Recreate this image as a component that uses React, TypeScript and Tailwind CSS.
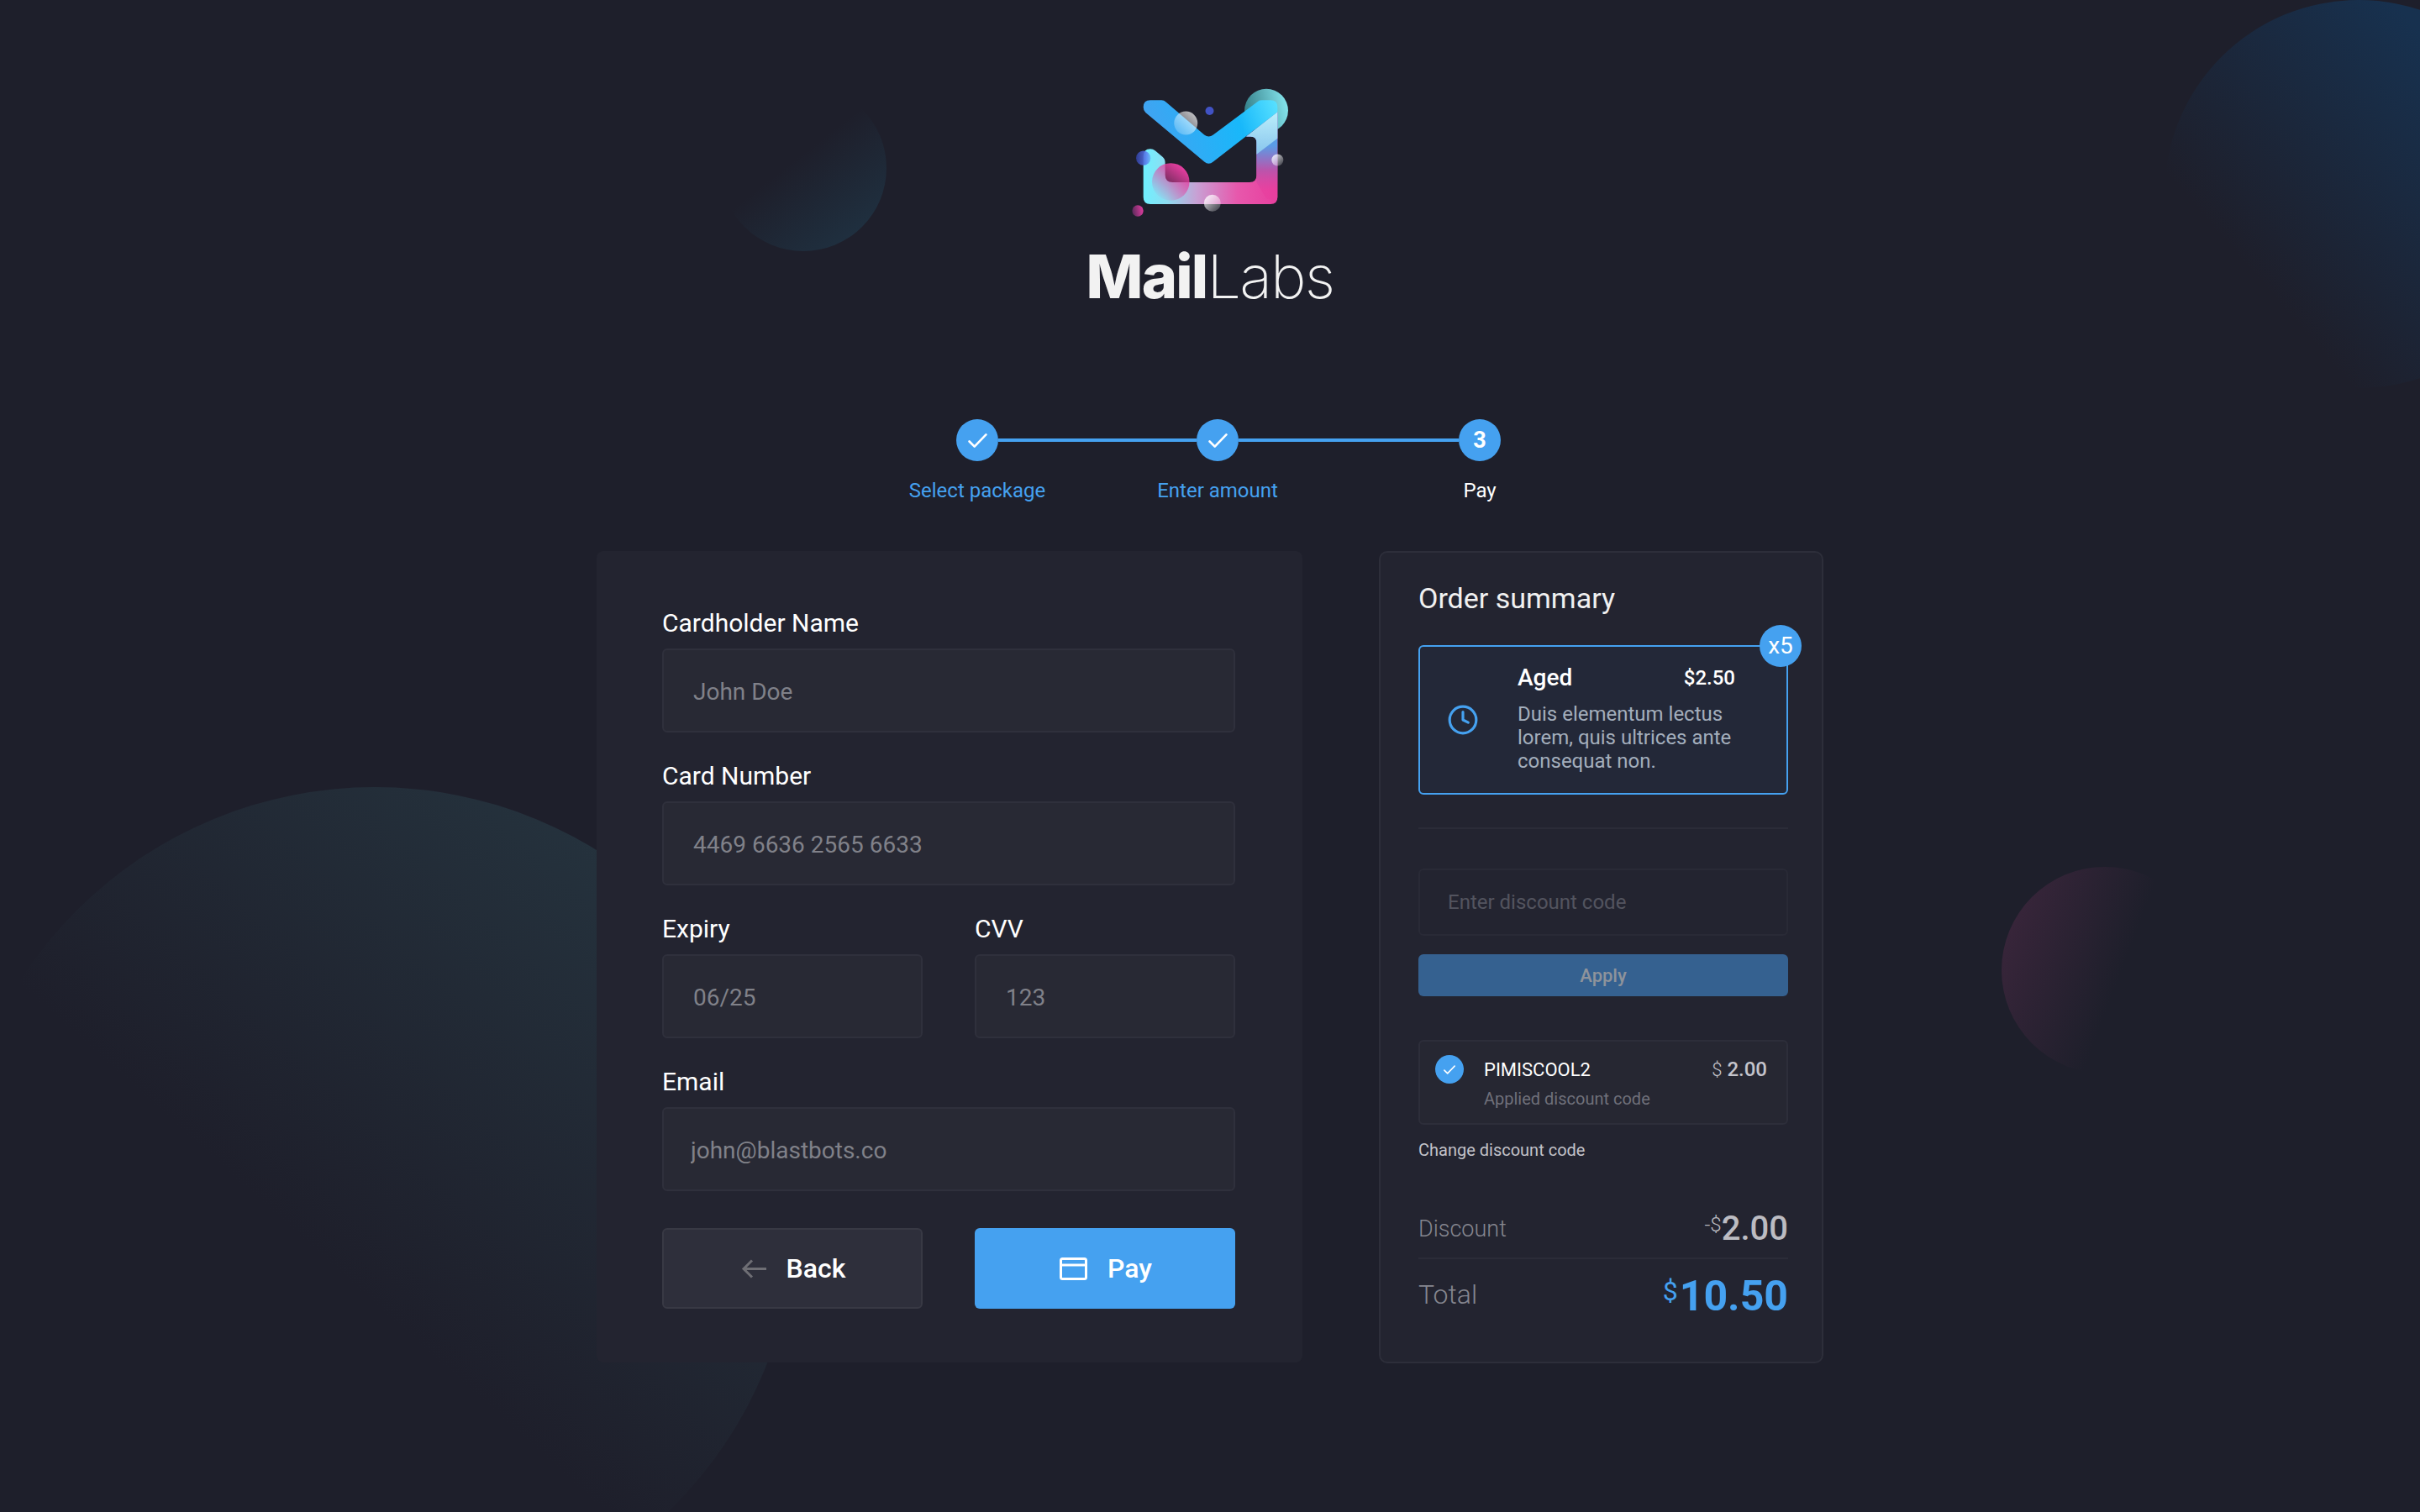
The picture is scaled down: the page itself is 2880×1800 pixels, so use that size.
import { Clock } from 'lucide-react';

function CheckMark({ className }: { className: string }) {
  return (
    <svg viewBox="0 0 24 18" fill="none" stroke="white" strokeWidth="2.8" strokeLinecap="round" strokeLinejoin="round" className={className}>
      <path d="M1.5 10 L8 16.5 L22.5 1.5" />
    </svg>
  );
}

function Logo() {
  return (
    <svg viewBox="320 75 560 460" className="w-[187px] h-[153px]">
      <defs>
        <linearGradient id="teal" x1="0" y1="0.5" x2="1" y2="0.3">
          <stop offset="0" stopColor="#35808a" />
          <stop offset="1" stopColor="#86e6ee" />
        </linearGradient>
        <linearGradient id="bottom" gradientUnits="userSpaceOnUse" x1="360" y1="0" x2="840" y2="0">
          <stop offset="0" stopColor="#6ff0ff" />
          <stop offset="0.18" stopColor="#8fdcf0" />
          <stop offset="0.4" stopColor="#c8a0d4" />
          <stop offset="0.7" stopColor="#e758ac" />
          <stop offset="1" stopColor="#e83e9e" />
        </linearGradient>
        <linearGradient id="side" gradientUnits="userSpaceOnUse" x1="0" y1="280" x2="0" y2="440">
          <stop offset="0" stopColor="#5a9ce6" />
          <stop offset="0.55" stopColor="#b955ac" />
          <stop offset="1" stopColor="#e83e9e" stopOpacity="0.6" />
        </linearGradient>
        <linearGradient id="vee" gradientUnits="userSpaceOnUse" x1="360" y1="300" x2="840" y2="120">
          <stop offset="0" stopColor="#47a0f0" />
          <stop offset="0.7" stopColor="#18b8fa" />
          <stop offset="1" stopColor="#5ae2ff" />
        </linearGradient>
        <linearGradient id="gloss" gradientUnits="userSpaceOnUse" x1="800" y1="170" x2="800" y2="300">
          <stop offset="0" stopColor="#b8ecfa" />
          <stop offset="1" stopColor="#8cc8ee" />
        </linearGradient>
        <linearGradient id="ballA" x1="1" y1="0" x2="0" y2="1">
          <stop offset="0" stopColor="#fff" stopOpacity="0.8" />
          <stop offset="1" stopColor="#fff" stopOpacity="0.12" />
        </linearGradient>
        <linearGradient id="ballB" x1="0" y1="0" x2="1" y2="1">
          <stop offset="0" stopColor="#fff" stopOpacity="0.9" />
          <stop offset="1" stopColor="#fff" stopOpacity="0.1" />
        </linearGradient>
        <linearGradient id="pinkBall" x1="0.8" y1="0.1" x2="0.2" y2="0.9">
          <stop offset="0" stopColor="#e63ea0" />
          <stop offset="1" stopColor="#e63ea0" stopOpacity="0.05" />
        </linearGradient>
        <linearGradient id="pinkDot" x1="1" y1="0.4" x2="0" y2="0.6">
          <stop offset="0" stopColor="#e03ca0" />
          <stop offset="1" stopColor="#5a2a5a" />
        </linearGradient>
        <linearGradient id="blueDot" x1="0" y1="0.5" x2="1" y2="0.5">
          <stop offset="0" stopColor="#2d3a90" />
          <stop offset="0.7" stopColor="#5a78f0" stopOpacity="0.85" />
          <stop offset="1" stopColor="#5a78f0" stopOpacity="0.4" />
        </linearGradient>
      </defs>
      <circle cx="800" cy="155" r="78" fill="url(#teal)" />
      <path
        d="M360 318 Q360 292 385 292 Q395 292 402 298 L428 320 Q438 328 438 340 V385 Q438 412 465 412 H740 Q765 412 765 387 V270 Q765 248 743 248 H728 L840 160 V465 Q840 490 815 490 H385 Q360 490 360 465 Z"
        fill="url(#bottom)"
      />
      <path d="M765 270 Q765 248 743 248 H728 L840 160 V465 Q840 480 800 470 L765 412 Z" fill="url(#side)" />
      <path d="M728 248 L840 160 V255 L765 312 V270 Q765 248 743 248 Z" fill="url(#gloss)" />
      <path
        d="M385 118 H425 Q434 118 442 125 L578 242 Q594 254 610 242 L770 122 Q775 118 785 118 H815 Q840 118 840 143 V160 L610 338 Q594 352 578 338 L368 162 Q360 155 360 143 Q360 118 385 118 Z"
        fill="url(#vee)"
      />
      <circle cx="512" cy="200" r="42" fill="url(#ballA)" />
      <circle cx="597" cy="156" r="15" fill="#4152c4" />
      <circle cx="840" cy="332" r="21" fill="url(#ballB)" />
      <circle cx="360" cy="325" r="26" fill="url(#blueDot)" />
      <circle cx="458" cy="410" r="67" fill="url(#pinkBall)" />
      <circle cx="607" cy="486" r="30" fill="url(#ballB)" />
      <circle cx="340" cy="514" r="20" fill="url(#pinkDot)" />
    </svg>
  );
}

function Field({ label, placeholder, className = '', inputClass = 'pl-[35px]' }: { label: string; placeholder: string; className?: string; inputClass?: string }) {
  return (
    <div className={className}>
      <label className="block text-[30px] leading-[41px] text-white mb-[10px]">{label}</label>
      <input
        placeholder={placeholder}
        className={`block w-full h-[100px] pt-[2px] pr-[35px] rounded-[6px] border-2 border-[#2f303c] bg-[#282934] text-[28px] text-white placeholder:text-[#808189] outline-none ${inputClass}`}
      />
    </div>
  );
}

function Step({ label, done, children }: { label: string; done: boolean; children: React.ReactNode }) {
  return (
    <div className="flex flex-col items-center w-[50px]">
      <div className="flex items-center justify-center size-[50px] rounded-full bg-[#45a1f0] text-[27px] font-bold text-white">
        {children}
      </div>
      <div className={`mt-[20px] text-[24px] leading-[30px] whitespace-nowrap ${done ? 'text-[#45a1f0]' : 'text-white'}`}>{label}</div>
    </div>
  );
}

export default function App() {
  return (
    <div className="relative h-[1800px] overflow-hidden bg-[#1e1f2b] font-[Roboto,sans-serif]">
      {/* Background blobs */}
      <div className="absolute left-[-56px] top-[937px] size-[1004px] rounded-full bg-[linear-gradient(42deg,transparent_44%,#25333e_88%)]" />
      <div className="absolute left-[2576px] top-0 size-[462px] rounded-full bg-[linear-gradient(49deg,transparent_26%,#17314f_78%)]" />
      <div className="absolute left-[2382px] top-[1032px] size-[246px] rounded-full bg-[linear-gradient(291deg,transparent_44%,#38253a_90%)]" />
      <div className="absolute left-[857px] top-[101px] size-[198px] rounded-full bg-[linear-gradient(142deg,transparent_45%,#1f3040_88%)]" />

      <div className="relative flex flex-col items-center pt-[105px]">
        <Logo />
        <div className="mt-[26px] font-[Inter,sans-serif] text-[72px] leading-[90px] tracking-[-0.025em] text-[#f2f2f2]">
          <span className="font-extrabold">Mail</span>
          <span className="font-[250]">Labs</span>
        </div>

        <div className="w-[1460px] mt-[125px]">
          {/* Stepper */}
          <div className="flex items-start ml-[428px]">
            <Step label="Select package" done>
              <CheckMark className="w-[23px] h-[17px]" />
            </Step>
            <div className="w-[236px] h-[4px] mt-[23px] bg-[#45a1f0]" />
            <Step label="Enter amount" done>
              <CheckMark className="w-[23px] h-[17px]" />
            </Step>
            <div className="w-[262px] h-[4px] mt-[23px] bg-[#45a1f0]" />
            <Step label="Pay" done={false}>
              3
            </Step>
          </div>

          <div className="flex items-stretch gap-[91px] mt-[57px]">
            {/* Payment form */}
            <form className="w-[840px] rounded-[8px] bg-[#232430] pl-[78px] pr-[80px] pt-[65px] pb-[64px]">
              <Field label="Cardholder Name" placeholder="John Doe" />
              <Field label="Card Number" placeholder="4469 6636 2565 6633" className="mt-[31px]" />
              <div className="grid grid-cols-2 gap-[62px] mt-[31px]">
                <Field label="Expiry" placeholder="06/25" />
                <Field label="CVV" placeholder="123" />
              </div>
              <Field label="Email" placeholder="john@blastbots.co" className="mt-[31px]" inputClass="pl-[32px]" />
              <div className="grid grid-cols-2 gap-[62px] mt-[44px]">
                <button type="button" className="flex items-center justify-center gap-[24px] h-[96px] pl-[2px] rounded-[6px] border-2 border-[#383944] bg-[#2e2f3b] text-[32px] font-medium text-white">
                  <svg viewBox="0 0 30 23" fill="none" stroke="#6e6e74" strokeWidth="3" className="w-[30px] h-[23px]">
                    <path d="M30 11.5H3 M13 1.5L3 11.5L13 21.5" />
                  </svg>
                  Back
                </button>
                <button type="button" className="flex items-center justify-center gap-[24px] h-[96px] pl-[2px] rounded-[6px] bg-[#45a1f0] text-[32px] font-medium text-white">
                  <svg viewBox="0 0 33 27" fill="none" stroke="white" strokeWidth="3" className="w-[33px] h-[27px]">
                    <rect x="1.5" y="1.5" width="30" height="24" rx="2" />
                    <path d="M1.5 9H31.5" />
                  </svg>
                  Pay
                </button>
              </div>
            </form>

            {/* Order summary */}
            <aside className="w-[529px] -mb-[1px] rounded-[10px] border-2 border-[#2d2e3a] bg-[#232430] pl-[45px] pr-[40px] pt-[34px]">
              <h2 className="text-[34px] leading-[41px] text-[#f0f0f0]">Order summary</h2>

              <div className="relative flex items-center mt-[35px] h-[178px] rounded-[6px] border-2 border-[#45a1f0] bg-[#232838]">
                <Clock className="size-[38px] ml-[32px] text-[#45a1f0]" strokeWidth={2} />
                <div className="ml-[46px] w-[259px] pb-[5px]">
                  <div className="flex items-center justify-between leading-[34px]">
                    <span className="text-[28px] font-medium text-white">Aged</span>
                    <span className="text-[24px] font-medium text-white">$2.50</span>
                  </div>
                  <p className="mt-[12px] text-[24px] leading-[28px] text-[#a3aebc]">Duis elementum lectus lorem, quis ultrices ante consequat non.</p>
                </div>
                <span className="absolute right-[-18px] top-[-26px] flex items-center justify-center size-[50px] rounded-full bg-[#45a1f0] text-[28px] text-white">x5</span>
              </div>

              <div className="h-[2px] mt-[39px] bg-[#2b2c38]" />

              <input
                placeholder="Enter discount code"
                className="block w-full h-[80px] mt-[47px] px-[33px] rounded-[6px] border-2 border-[#292a36] bg-transparent text-[24px] text-white placeholder:text-[#53545f] outline-none"
              />
              <button type="button" className="block w-full h-[50px] mt-[22px] rounded-[6px] bg-[#356190] text-[22px] font-medium text-[#8e939b]">
                Apply
              </button>

              <div className="flex items-start h-[101px] mt-[52px] pl-[18px] pr-[23px] pt-[16px] rounded-[6px] border-2 border-[#2d2e3a] bg-[#262732]">
                <span className="flex items-center justify-center size-[34px] rounded-full bg-[#45a1f0]">
                  <CheckMark className="w-[14px] h-[11px]" />
                </span>
                <div className="ml-[24px] flex-1">
                  <div className="flex items-center justify-between h-[34px]">
                    <span className="text-[22px] text-white">PIMISCOOL2</span>
                    <span className="text-[24px] font-medium text-[#c4c4cb]">
                      <span className="text-[22px] font-light mr-[6px]">$</span>2.00
                    </span>
                  </div>
                  <div className="text-[20px] leading-[26px] mt-[5px] text-[#6f707a]">Applied discount code</div>
                </div>
              </div>

              <div className="mt-[15px] text-[20px] leading-[30px] text-[#c2c2c8]">Change discount code</div>

              <div className="flex items-center justify-between h-[48px] mt-[55px]">
                <span className="text-[27px] font-light text-[#85868f]">Discount</span>
                <span className="flex items-start text-[40px] leading-[48px] font-medium text-[#bcbcc2]">
                  <span className="text-[24px] leading-[30px] mt-[4px] font-light">-$</span>2.00
                </span>
              </div>
              <div className="h-[2px] mt-[10px] bg-[#2b2c38]" />
              <div className="flex items-center justify-between h-[60px] mt-[13px]">
                <span className="text-[32px] font-light text-[#85868f] -mt-[2px]">Total</span>
                <span className="flex items-start text-[50px] leading-[60px] font-bold text-[#45a1f0] mt-[2px]">
                  <span className="text-[32px] leading-[38px] mt-[5px] font-normal mr-[2px]">$</span>10.50
                </span>
              </div>
            </aside>
          </div>
        </div>
      </div>
    </div>
  );
}
